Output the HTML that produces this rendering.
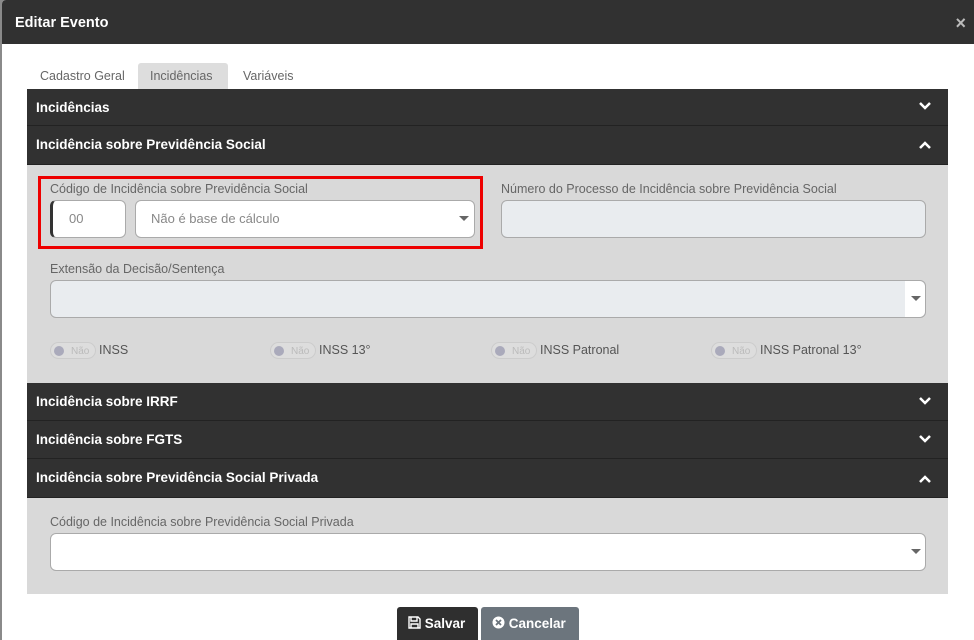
<!DOCTYPE html>
<html><head><meta charset="utf-8"><style>
*{box-sizing:border-box;margin:0;padding:0}
body{width:974px;height:640px;overflow:hidden;background:#8a8a8a;font-family:"Liberation Sans",sans-serif;position:relative}
.modal{position:absolute;left:2px;top:0;width:972px;height:640px;background:#fff;border-radius:4px 0 0 0}
.hdr{height:44px;background:#313131;color:#fff;font-weight:bold;font-size:14.5px;padding:15px 0 0 13px;border-radius:4px 0 0 0}
.x{position:absolute;right:8px;top:13px;color:#bbb;font-size:18px;font-weight:bold}
.tab{position:absolute;top:63px;height:26px;font-size:12.5px;color:#666;padding:6px 12px}
.acc{position:absolute;left:25px;width:921px;background:#313131;color:#fff;font-weight:bold;font-size:13.5px;padding-left:9px;border-bottom:1px solid #222}
.acc svg{position:absolute;right:16px}
.body{position:absolute;left:25px;width:921px;background:#d9d9d9}
.lbl{position:absolute;font-size:12.5px;color:#666}
.inp{position:absolute;background:#fff;border:1px solid #aaa;border-radius:6px;font-size:13px;color:#888}
.car{position:absolute;right:5px;top:15px;border:5px solid transparent;border-top:5px solid #666;border-bottom:0}
.tg{position:absolute;top:342px;height:17px;width:46px;border:1px solid #ccc;border-radius:9px;font-size:10px;color:#bbb;padding:3px 0 0 20px;background:#ddd}
.tg:before{content:"";position:absolute;left:3px;top:3px;width:10px;height:10px;border-radius:50%;background:#aab}
.tl{position:absolute;top:343px;font-size:12.5px;color:#555}
.btn{position:absolute;top:607px;height:33px;color:#fff;font-weight:bold;font-size:13.5px;padding:9px 0 0 11px;border-radius:3px 3px 0 0}
</style></head><body>
<div class="modal">
<div class="hdr">Editar Evento</div><div class="x">×</div>
<div class="tab" style="left:26px">Cadastro Geral</div>
<div class="tab" style="left:136px;width:90px;background:#ddd;border-radius:3px 3px 0 0">Incidências</div>
<div class="tab" style="left:229px">Variáveis</div>
<div class="acc" style="top:89px;height:37px;padding-top:11px">Incidências<svg style="top:12px" width="14" height="10"><path d="M2 2l5 5 5-5" stroke="#fff" stroke-width="2.5" fill="none"/></svg></div>
<div class="acc" style="top:126px;height:39px;padding-top:11px">Incidência sobre Previdência Social<svg style="top:14px" width="14" height="10"><path d="M2 8l5-5 5 5" stroke="#fff" stroke-width="2.5" fill="none"/></svg></div>
<div class="body" style="top:165px;height:218px"></div>
<div style="position:absolute;left:36px;top:176px;width:445px;height:73px;border:3px solid #e00"></div>
<div class="lbl" style="left:48px;top:182px">Código de Incidência sobre Previdência Social</div>
<div class="inp" style="left:48px;top:200px;width:76px;height:38px;padding:10px 0 0 16px;border-left:3px solid #333">00</div>
<div class="inp" style="left:133px;top:200px;width:340px;height:38px;padding:10px 0 0 15px">Não é base de cálculo<span class="car" style="right:5px"></span></div>
<div class="lbl" style="left:499px;top:182px">Número do Processo de Incidência sobre Previdência Social</div>
<div class="inp" style="left:499px;top:200px;width:425px;height:38px;background:#e9ecef"></div>
<div class="lbl" style="left:48px;top:262px">Extensão da Decisão/Sentença</div>
<div class="inp" style="left:48px;top:280px;width:876px;height:38px;background:#e9ecef"><div style="position:absolute;right:0;top:0;width:20px;height:36px;background:#fff;border-radius:0 6px 6px 0"></div><span class="car" style="right:4px"></span></div>
<div class="tg" style="left:48px">Não</div><div class="tl" style="left:97px">INSS</div>
<div class="tg" style="left:268px">Não</div><div class="tl" style="left:317px">INSS 13°</div>
<div class="tg" style="left:489px">Não</div><div class="tl" style="left:538px">INSS Patronal</div>
<div class="tg" style="left:709px">Não</div><div class="tl" style="left:758px">INSS Patronal 13°</div>
<div class="acc" style="top:383px;height:38px;padding-top:11px">Incidência sobre IRRF<svg style="top:13px" width="14" height="10"><path d="M2 2l5 5 5-5" stroke="#fff" stroke-width="2.5" fill="none"/></svg></div>
<div class="acc" style="top:421px;height:38px;padding-top:11px">Incidência sobre FGTS<svg style="top:13px" width="14" height="10"><path d="M2 2l5 5 5-5" stroke="#fff" stroke-width="2.5" fill="none"/></svg></div>
<div class="acc" style="top:459px;height:39px;padding-top:11px">Incidência sobre Previdência Social Privada<svg style="top:15px" width="14" height="10"><path d="M2 8l5-5 5 5" stroke="#fff" stroke-width="2.5" fill="none"/></svg></div>
<div class="body" style="top:498px;height:96px"></div>
<div class="lbl" style="left:48px;top:515px">Código de Incidência sobre Previdência Social Privada</div>
<div class="inp" style="left:48px;top:533px;width:876px;height:38px"><span class="car" style="right:4px"></span></div>
<div class="btn" style="left:395px;width:81px;background:#2f2f2f"><svg width="13" height="13" viewBox="0 0 13 13" style="vertical-align:-1px"><path d="M1 1h9l2 2v9H1z M3 1v4h6V1 M3 12V8h7v4" stroke="#fff" stroke-width="1.4" fill="none"/></svg> Salvar</div>
<div class="btn" style="left:479px;width:98px;background:#6c757d"><svg width="13" height="13" viewBox="0 0 13 13" style="vertical-align:-1px"><circle cx="6.5" cy="6.5" r="6" fill="#fff"/><path d="M4 4l5 5M9 4l-5 5" stroke="#6c757d" stroke-width="1.8"/></svg> Cancelar</div>
</div>
</body></html>
